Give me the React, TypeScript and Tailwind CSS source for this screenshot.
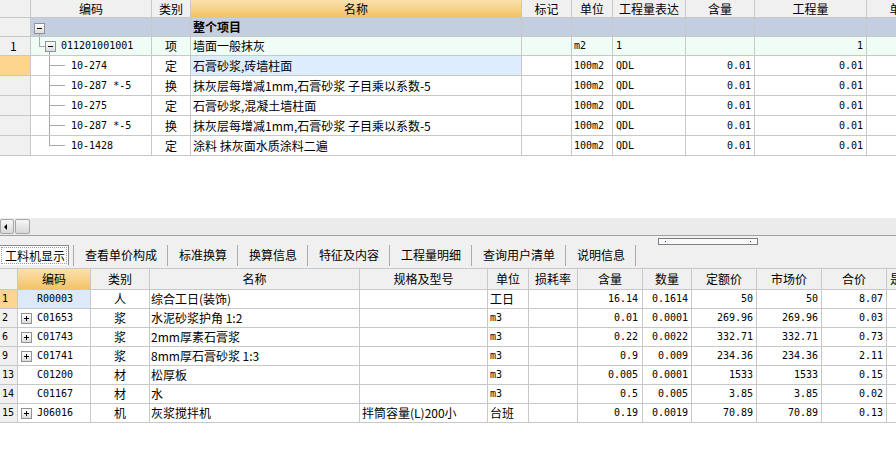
import React from "react";

type Tree = "root" | "item" | "child" | "last";

type TopRow = {
  tree: Tree;
  h: string;
  rn: string;
  rnBg: string;
  bg: string;
  nameBg?: string;
  code: string;
  kind: string;
  name: string;
  bold?: boolean;
  unit: string;
  expr: string;
  content: string;
  qty: string;
};

type BottomRow = {
  rn: string;
  rnBg: string;
  codeBg?: string;
  plus?: boolean;
  code: string;
  kind: string;
  name: string;
  spec: string;
  unit: string;
  content: string;
  amount: string;
  quota: string;
  market: string;
  total: string;
};

const cell =
  "shrink-0 border-r border-[#c8c8c8] flex items-center overflow-hidden whitespace-pre leading-none";
const mono = "font-['DejaVu_Sans_Mono',monospace] text-[10px]";
const headGray = "bg-[#f0f0f0]";
const headActive = "bg-linear-to-b from-[#fbe1ab] to-[#f2c366]";

const topCols = [
  { w: "w-[31px]", title: "" },
  { w: "w-[121px]", title: "编码" },
  { w: "w-[39px]", title: "类别" },
  { w: "w-[331px]", title: "名称", active: true },
  { w: "w-[50px]", title: "标记" },
  { w: "w-[41px]", title: "单位" },
  { w: "w-[73px]", title: "工程量表达" },
  { w: "w-[69px]", title: "含量" },
  { w: "w-[112px]", title: "工程量" },
  { w: "w-[70px]", title: "单价" },
];

const topRows: TopRow[] = [
  { tree: "root", h: "h-[19px]", rn: "", rnBg: "bg-[#f0f0f0]", bg: "bg-[#c3cfe0]", code: "", kind: "", name: "整个项目", bold: true, unit: "", expr: "", content: "", qty: "" },
  { tree: "item", h: "h-[19px]", rn: "1", rnBg: "bg-[#f0f0f0]", bg: "bg-[#f0fcf6]", code: "011201001001", kind: "项", name: "墙面一般抹灰", unit: "m2", expr: "1", content: "", qty: "1" },
  { tree: "child", h: "h-[20px]", rn: "", rnBg: "bg-[#fdd58e]", bg: "bg-white", nameBg: "bg-[#ddedfd]", code: "10-274", kind: "定", name: "石膏砂浆,砖墙柱面", unit: "100m2", expr: "QDL", content: "0.01", qty: "0.01" },
  { tree: "child", h: "h-[20px]", rn: "", rnBg: "bg-[#f0f0f0]", bg: "bg-white", code: "10-287 *-5", kind: "换", name: "抹灰层每增减1mm,石膏砂浆 子目乘以系数-5", unit: "100m2", expr: "QDL", content: "0.01", qty: "0.01" },
  { tree: "child", h: "h-[20px]", rn: "", rnBg: "bg-[#f0f0f0]", bg: "bg-white", code: "10-275", kind: "定", name: "石膏砂浆,混凝土墙柱面", unit: "100m2", expr: "QDL", content: "0.01", qty: "0.01" },
  { tree: "child", h: "h-[20px]", rn: "", rnBg: "bg-[#f0f0f0]", bg: "bg-white", code: "10-287 *-5", kind: "换", name: "抹灰层每增减1mm,石膏砂浆 子目乘以系数-5", unit: "100m2", expr: "QDL", content: "0.01", qty: "0.01" },
  { tree: "last", h: "h-[20px]", rn: "", rnBg: "bg-[#f0f0f0]", bg: "bg-white", code: "10-1428", kind: "定", name: "涂料 抹灰面水质涂料二遍", unit: "100m2", expr: "QDL", content: "0.01", qty: "0.01" },
];

const bottomCols = [
  { w: "w-[18px]", title: "" },
  { w: "w-[73px]", title: "编码", active: true },
  { w: "w-[59px]", title: "类别" },
  { w: "w-[210px]", title: "名称" },
  { w: "w-[128px]", title: "规格及型号" },
  { w: "w-[41px]", title: "单位" },
  { w: "w-[49px]", title: "损耗率" },
  { w: "w-[65px]", title: "含量" },
  { w: "w-[49px]", title: "数量" },
  { w: "w-[65px]", title: "定额价" },
  { w: "w-[65px]", title: "市场价" },
  { w: "w-[65px]", title: "合价" },
  { w: "w-[80px]", title: "是否暂估" },
];

const bottomRows: BottomRow[] = [
  { rn: "1", rnBg: "bg-[#fdd58e]", codeBg: "bg-[#dde9f8]", code: "R00003", kind: "人", name: "综合工日(装饰)", spec: "", unit: "工日", content: "16.14", amount: "0.1614", quota: "50", market: "50", total: "8.07" },
  { rn: "2", rnBg: "bg-[#f0f0f0]", plus: true, code: "C01653", kind: "浆", name: "水泥砂浆护角 1:2", spec: "", unit: "m3", content: "0.01", amount: "0.0001", quota: "269.96", market: "269.96", total: "0.03" },
  { rn: "6", rnBg: "bg-[#f0f0f0]", plus: true, code: "C01743", kind: "浆", name: "2mm厚素石膏浆", spec: "", unit: "m3", content: "0.22", amount: "0.0022", quota: "332.71", market: "332.71", total: "0.73" },
  { rn: "9", rnBg: "bg-[#f0f0f0]", plus: true, code: "C01741", kind: "浆", name: "8mm厚石膏砂浆 1:3", spec: "", unit: "m3", content: "0.9", amount: "0.009", quota: "234.36", market: "234.36", total: "2.11" },
  { rn: "13", rnBg: "bg-[#f0f0f0]", code: "C01200", kind: "材", name: "松厚板", spec: "", unit: "m3", content: "0.005", amount: "0.0001", quota: "1533", market: "1533", total: "0.15" },
  { rn: "14", rnBg: "bg-[#f0f0f0]", code: "C01167", kind: "材", name: "水", spec: "", unit: "m3", content: "0.5", amount: "0.005", quota: "3.85", market: "3.85", total: "0.02" },
  { rn: "15", rnBg: "bg-[#f0f0f0]", plus: true, code: "J06016", kind: "机", name: "灰浆搅拌机", spec: "拌筒容量(L)200小", unit: "台班", content: "0.19", amount: "0.0019", quota: "70.89", market: "70.89", total: "0.13" },
];

const tabs = ["查看单价构成", "标准换算", "换算信息", "特征及内容", "工程量明细", "查询用户清单", "说明信息"];

const ToggleBox = ({ plus }: { plus?: boolean }) => (
  <div className="relative w-[11px] h-[11px] border border-[#929292] bg-linear-to-b from-white to-[#dcdcdc]">
    <div className="absolute left-[2px] top-[4px] w-[5px] h-px bg-black" />
    {plus && <div className="absolute left-[4px] top-[2px] w-px h-[5px] bg-black" />}
  </div>
);

const TreeCode = ({ tree, code }: { tree: Tree; code: string }) => {
  const line = "absolute bg-[#a8a8a8]";
  return (
    <div className="relative h-full w-full flex items-center">
      {tree === "root" && (
        <>
          <div className="absolute left-[3px] top-[5px]">
            <ToggleBox />
          </div>
          <div className={`${line} left-[8px] top-[16px] bottom-0 w-px`} />
        </>
      )}
      {tree === "item" && (
        <>
          <div className={`${line} left-[8px] top-0 h-[10px] w-px`} />
          <div className={`${line} left-[8px] top-[9px] h-px w-[6px]`} />
          <div className="absolute left-[14px] top-[4px]">
            <ToggleBox />
          </div>
          <div className={`${line} left-[18px] top-[15px] bottom-0 w-px`} />
          <span className={`pl-[30px] ${mono}`}>{code}</span>
        </>
      )}
      {(tree === "child" || tree === "last") && (
        <>
          <div className={`${line} left-[18px] top-0 w-px ${tree === "last" ? "h-[10px]" : "bottom-0"}`} />
          <div className={`${line} left-[18px] top-[9px] h-px w-[16px]`} />
          <span className={`pl-[40px] ${mono}`}>{code}</span>
        </>
      )}
    </div>
  );
};

const TopGrid = () => (
  <div className="h-[218px] overflow-hidden bg-white">
    <div className="flex h-[18px] border-b border-[#c8c8c8]">
      {topCols.map((c, i) => (
        <div
          key={i}
          className={`${cell} ${c.w} justify-center ${c.active ? headActive : headGray}`}
        >
          {c.title}
        </div>
      ))}
    </div>
    {topRows.map((r, i) => (
      <div key={i} className={`flex ${r.h} border-b border-[#c8c8c8] ${r.bg}`}>
        <div className={`${cell} w-[31px] ${r.rnBg} pl-[10px]`}>{r.rn}</div>
        <div className={`${cell} w-[121px]`}>
          <TreeCode tree={r.tree} code={r.code} />
        </div>
        <div className={`${cell} w-[39px] justify-center`}>{r.kind}</div>
        <div className={`${cell} w-[331px] pl-[2px] ${r.nameBg ?? ""} ${r.bold ? "font-bold" : ""}`}>
          {r.name}
        </div>
        <div className={`${cell} w-[50px]`} />
        <div className={`${cell} w-[41px] pl-[2px] ${mono}`}>{r.unit}</div>
        <div className={`${cell} w-[73px] pl-[3px] ${mono}`}>{r.expr}</div>
        <div className={`${cell} w-[69px] justify-end pr-[3px] ${mono}`}>{r.content}</div>
        <div className={`${cell} w-[112px] justify-end pr-[3px] ${mono}`}>{r.qty}</div>
        <div className={`${cell} w-[70px]`} />
      </div>
    ))}
  </div>
);

const ScrollStrip = () => (
  <div className="h-[17px] bg-[#ebebeb] flex items-center gap-px">
    <div className="w-[14px] h-[15px] border border-[#a6a6a6] rounded-[2px] bg-linear-to-b from-[#f6f6f6] to-[#d8d8d8] flex items-center pl-[3px]">
      <div className="w-0 h-0 border-y-[3px] border-y-transparent border-r-[3px] border-r-black" />
    </div>
    <div className="w-[15px] h-[15px] border border-[#a6a6a6] rounded-[2px] bg-linear-to-b from-[#f6f6f6] to-[#d8d8d8]" />
  </div>
);

const TabStrip = () => (
  <div className="relative h-[33px] border-t border-[#a0a0a0] bg-[#f0f0f0] pt-[9px]">
    <div className="absolute left-[658px] top-[2px] w-[100px] h-[7px] border border-[#808080] bg-[#f8f8f8]">
      <div className="absolute left-[6px] top-[2px] w-px h-px bg-[#333399]" />
      <div className="absolute right-[6px] top-[2px] w-px h-px bg-[#333399]" />
    </div>
    <div className="flex h-[20px] items-stretch">
      <div className="w-[69px] shrink-0 bg-white border-t border-r border-[#8a8a8a] p-px">
        <div className="h-full border border-dotted border-[#9a9a9a] flex items-center pl-[3px] leading-none">
          工料机显示
        </div>
      </div>
      <div className="w-[4px] shrink-0" />
      {tabs.map((t) => (
        <React.Fragment key={t}>
          <div className="w-px shrink-0 h-[21px] bg-[#a9a9a9]" />
          <div className="shrink-0 pl-[11px] pr-[10px] flex items-center leading-none whitespace-nowrap">
            {t}
          </div>
        </React.Fragment>
      ))}
      <div className="w-px shrink-0 h-[21px] bg-[#a9a9a9]" />
    </div>
  </div>
);

const BottomGrid = () => (
  <div className="bg-white">
    <div className="flex h-[22px] border-y border-[#c8c8c8]">
      {bottomCols.map((c, i) => (
        <div
          key={i}
          className={`${cell} ${c.w} ${i === bottomCols.length - 1 ? "justify-start pl-[3px]" : "justify-center"} ${c.active ? headActive : headGray}`}
        >
          {c.title}
        </div>
      ))}
    </div>
    {bottomRows.map((r) => (
      <div key={r.rn} className="flex h-[19px] border-b border-[#c8c8c8]">
        <div className={`${cell} w-[18px] pl-[2px] ${r.rnBg} ${mono}`}>{r.rn}</div>
        <div className={`${cell} w-[73px] relative ${r.codeBg ?? ""}`}>
          {r.plus && (
            <div className="absolute left-[3px] top-[4px]">
              <ToggleBox plus />
            </div>
          )}
          <span className={`pl-[19px] ${mono}`}>{r.code}</span>
        </div>
        <div className={`${cell} w-[59px] justify-center`}>{r.kind}</div>
        <div className={`${cell} w-[210px] pl-[1px]`}>{r.name}</div>
        <div className={`${cell} w-[128px] pl-[2px]`}>{r.spec}</div>
        <div className={`${cell} w-[41px] pl-[2px] ${r.unit === "m3" ? mono : ""}`}>{r.unit}</div>
        <div className={`${cell} w-[49px]`} />
        <div className={`${cell} w-[65px] justify-end pr-[4px] ${mono}`}>{r.content}</div>
        <div className={`${cell} w-[49px] justify-end pr-[3px] ${mono}`}>{r.amount}</div>
        <div className={`${cell} w-[65px] justify-end pr-[3px] ${mono}`}>{r.quota}</div>
        <div className={`${cell} w-[65px] justify-end pr-[3px] ${mono}`}>{r.market}</div>
        <div className={`${cell} w-[65px] justify-end pr-[3px] ${mono}`}>{r.total}</div>
        <div className={`${cell} w-[80px]`} />
      </div>
    ))}
  </div>
);

export default function App() {
  return (
    <div className="w-[896px] h-[472px] overflow-hidden bg-white text-black text-[12px] font-['Noto_Sans_CJK_SC',sans-serif]">
      <TopGrid />
      <ScrollStrip />
      <TabStrip />
      <BottomGrid />
    </div>
  );
}
